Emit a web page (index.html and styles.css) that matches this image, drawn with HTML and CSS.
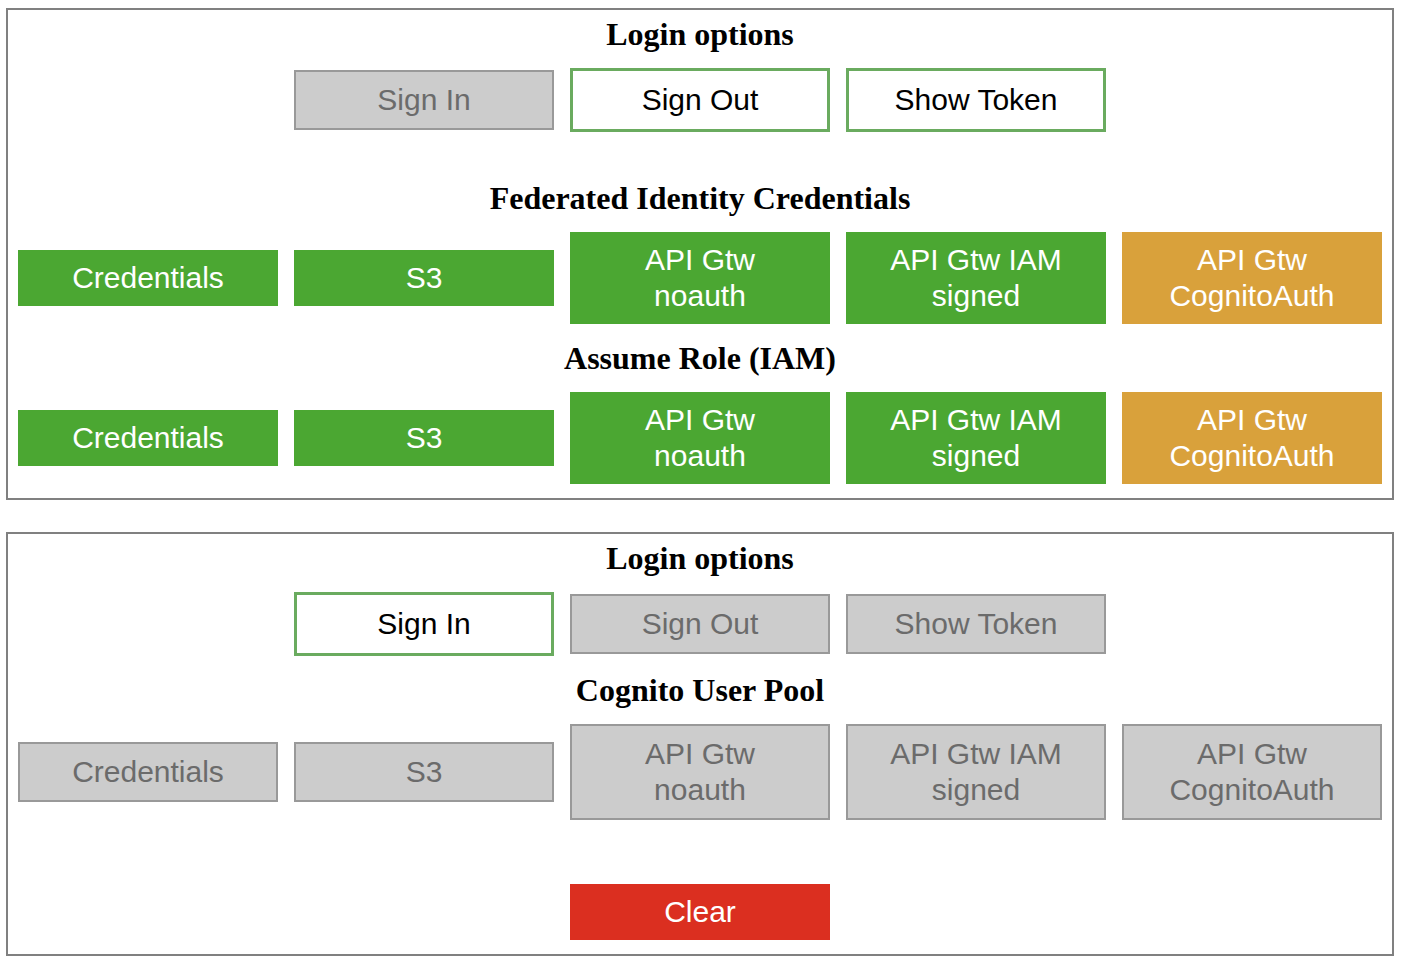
FILE: index.html
```html
<!DOCTYPE html>
<html>
<head>
<meta charset="utf-8">
<link rel="stylesheet" href="styles.css">
</head>
<body>
<section class="panel">
  <h2 class="title">Login options</h2>
  <div class="row row-login">
    <button class="btn btn-disabled">Sign In</button>
    <button class="btn btn-outline">Sign Out</button>
    <button class="btn btn-outline">Show Token</button>
  </div>
  <h2 class="title">Federated Identity Credentials</h2>
  <div class="row">
    <button class="btn btn-green">Credentials</button>
    <button class="btn btn-green">S3</button>
    <button class="btn btn-green">API Gtw<br>noauth</button>
    <button class="btn btn-green">API Gtw IAM<br>signed</button>
    <button class="btn btn-orange">API Gtw<br>CognitoAuth</button>
  </div>
  <h2 class="title">Assume Role (IAM)</h2>
  <div class="row">
    <button class="btn btn-green">Credentials</button>
    <button class="btn btn-green">S3</button>
    <button class="btn btn-green">API Gtw<br>noauth</button>
    <button class="btn btn-green">API Gtw IAM<br>signed</button>
    <button class="btn btn-orange">API Gtw<br>CognitoAuth</button>
  </div>
</section>
<section class="panel">
  <h2 class="title">Login options</h2>
  <div class="row">
    <button class="btn btn-outline">Sign In</button>
    <button class="btn btn-disabled">Sign Out</button>
    <button class="btn btn-disabled">Show Token</button>
  </div>
  <h2 class="title">Cognito User Pool</h2>
  <div class="row row-pool">
    <button class="btn btn-disabled">Credentials</button>
    <button class="btn btn-disabled">S3</button>
    <button class="btn btn-disabled">API Gtw<br>noauth</button>
    <button class="btn btn-disabled">API Gtw IAM<br>signed</button>
    <button class="btn btn-disabled">API Gtw<br>CognitoAuth</button>
  </div>
  <div class="row">
    <button class="btn btn-red">Clear</button>
  </div>
</section>
</body>
</html>
```

FILE: styles.css
```css
html, body {
  background: #ffffff;
}
body {
  margin: 8px 0 0 6px;
  font-family: "Liberation Serif", "Times New Roman", serif;
}
.panel {
  box-sizing: border-box;
  width: 1388px;
  border: 2px solid #808080;
  padding: 6px 10px 14px;
  display: flex;
  flex-direction: column;
  gap: 16px;
  margin-bottom: 32px;
}
.title {
  margin: 0;
  font-family: "Liberation Serif", "Times New Roman", serif;
  font-weight: bold;
  font-size: 32px;
  line-height: 36px;
  text-align: center;
  color: #000000;
}
.row {
  display: flex;
  justify-content: center;
  align-items: center;
  gap: 16px;
}
.row-login {
  margin-bottom: 32px;
}
.row-pool {
  margin-bottom: 48px;
}
.btn {
  box-sizing: border-box;
  width: 260px;
  margin: 0;
  padding: 10px 4px;
  font-family: "Liberation Sans", Arial, Helvetica, sans-serif;
  font-size: 30px;
  line-height: 36px;
  text-align: center;
  border: 0;
  border-radius: 0;
  cursor: pointer;
}
.btn-green {
  background: #4ba732;
  color: #ffffff;
}
.btn-orange {
  background: #d9a13b;
  color: #ffffff;
}
.btn-red {
  background: #db2f20;
  color: #ffffff;
}
.btn-outline {
  background: #ffffff;
  color: #000000;
  border: 3px solid #6aab5f;
  padding: 11px 4px;
}
.btn-disabled {
  background: #cccccc;
  color: #6b6b6b;
  border: 2px solid #999999;
}
```
